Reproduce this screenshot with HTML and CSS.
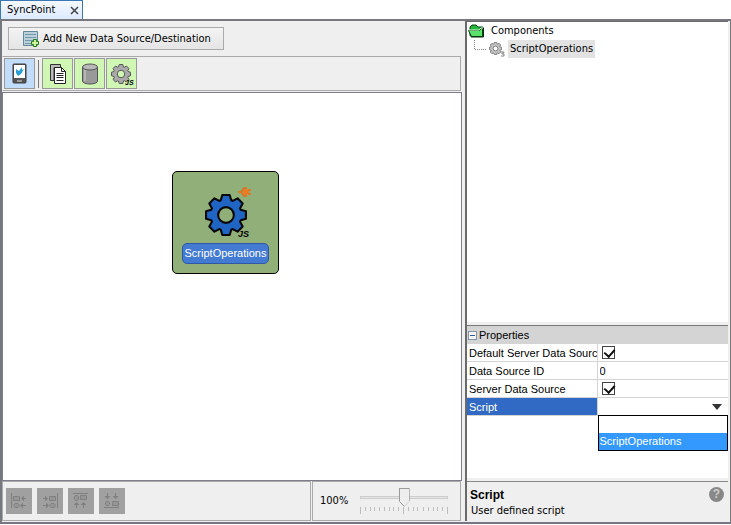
FILE: index.html
```html
<!DOCTYPE html>
<html lang="en">
<head>
<meta charset="utf-8">
<title>SyncPoint</title>
<link rel="stylesheet" href="styles.css">
</head>
<body>
<svg class="defs" aria-hidden="true">
  <symbol id="gear" viewBox="0 0 40 40">
    <path fill-rule="evenodd" d="M16.500 1H23.500L25 6L26.400 6.600L31 4.100L35.900 9L33.400 13.600L34 15L39 16.500V23.500L34 25L33.400 26.400L35.900 31L31 35.900L26.400 33.400L25 34L23.500 39H16.500L15 34L13.600 33.400L9 35.900L4.100 31L6.600 26.400L6 25L1 23.500V16.500L6 15L6.600 13.600L4.100 9L9 4.100L13.600 6.600L15 6ZM20 12.500a7.500 7.500 0 1 0 0 15a7.500 7.500 0 1 0 0-15z" stroke-linejoin="round"/>
  </symbol>
</svg>
<header class="tabs">
  <div class="tab">
    <span>SyncPoint</span>
    <button class="tab-close" type="button" aria-label="Close tab"><svg width="9" height="9" viewBox="0 0 9 9"><path d="M1 1l7 7M8 1L1 8" stroke="#444" stroke-width="1.500"/></svg></button>
  </div>
</header>
<main class="workspace">
  <section class="editor">
    <div class="actions">
      <button class="add-source" type="button">
        <svg width="16" height="16" viewBox="0 0 16 16"><path d="M.5.500h14v14H.5z" fill="#b9d1dc" stroke="#668795"/><path d="M2 3.500h11M2 6.500h11M2 9.500h8M2 12.500h7" stroke="#7798a8"/><path d="M10.500 8.500h3v2h2v3h-2v2h-3v-2h-2v-3h2z" fill="#c8f59c" stroke="#267b16"/></svg>
        Add New Data Source/Destination
      </button>
    </div>
    <div class="toolbar">
      <button class="tool tool-active" type="button" aria-label="Device">
        <svg width="15" height="21" viewBox="0 0 15 21"><rect x="1" y="1" width="13" height="19" rx="1" fill="#555" stroke="#3c3c3c"/><path d="M2 2h11v13H2z" fill="#fff"/><path d="M4 6l3 2 3-4v3l2-1-3 5-3 2-2-3z" fill="#2a9ed8"/><path d="M5 17h5v2H5z" fill="#999"/></svg>
      </button>
      <span class="tool-separator"></span>
      <button class="tool" type="button" aria-label="Document">
        <svg width="16" height="20" viewBox="0 0 16 20"><path d="M.5.500h10v3H4v13H.5z" fill="#bbb" stroke="#333"/><path d="M4.500 3.500h7l4 4v12h-11z" fill="#fff" stroke="#222"/><path d="M11.500 3.500v4h4M6.500 9.500h7M6.500 11.500h7M6.500 13.500h7M6.500 16.500h7" fill="none" stroke="#222"/></svg>
      </button>
      <button class="tool" type="button" aria-label="Database">
        <svg width="16" height="22" viewBox="0 0 16 22"><path d="M.5 4v14c0 4 15 4 15 0V4" fill="#999" stroke="#555"/><path d="M3 6v12" stroke="#b5b5b5" stroke-width="2"/><ellipse cx="8" cy="4" rx="7.500" ry="3" fill="#b8b8b8" stroke="#555"/></svg>
      </button>
      <button class="tool" type="button" aria-label="Script">
        <svg width="24" height="24" viewBox="0 0 24 24"><use href="#gear" x="1" y="2" width="20" height="20" fill="#aaa" stroke="#555" stroke-width="2"/><text class="js-small" x="15" y="23">JS</text></svg>
      </button>
    </div>
    <div class="canvas">
      <article class="node">
        <svg width="53" height="54" viewBox="0 0 53 54"><use href="#gear" x="6" y="10" width="42" height="42" fill="#2065c4" stroke="#080808" stroke-width="2"/><path d="M39 8h3l3-4h3M42 8l3 4h3M49 6h3M49 10h3" fill="none" stroke="#e36d16" stroke-width="1.500"/><circle cx="47" cy="8" r="3" fill="#ef7b21"/><text class="js" x="39" y="53">JS</text></svg>
        <span class="node-label">ScriptOperations</span>
      </article>
    </div>
    <footer class="editor-footer">
      <div class="alignment">
        <button class="align" type="button" disabled aria-label="Align left"><svg width="18" height="18" viewBox="0 0 18 18"><path class="edge" d="M1.500 1v15"/><path class="shape" d="M3.500 4.500h6v4h-6zM5 11.500h3l1 1v2l-1 1H5l-1-1v-2z"/><path class="stem" d="M12 6.500h4M11 13.500h5"/><path class="head" d="M14 3.500v6l-3-3zM13 10.500v6l-3-3z"/></svg></button>
        <button class="align" type="button" disabled aria-label="Align right"><svg width="18" height="18" viewBox="0 0 18 18"><path class="edge" d="M16.500 1v15"/><path class="shape" d="M8.500 4.500h6v4h-6zM10 11.500h3l1 1v2l-1 1h-3l-1-1v-2z"/><path class="stem" d="M2 6.500h4M2 13.500h5"/><path class="head" d="M4 3.500v6l3-3zM5 10.500v6l3-3z"/></svg></button>
        <button class="align" type="button" disabled aria-label="Align top"><svg width="18" height="18" viewBox="0 0 18 18"><path class="edge" d="M1 1.500h15"/><path class="shape" d="M3.500 3.500h2l1 1v3l-1 1h-2l-1-1v-3zM8.500 3.500h6v4h-6z"/><path class="stem" d="M4.500 12v4M11.500 12v4"/><path class="head" d="M1.500 13h6l-3-3zM8.500 13h6l-3-3z"/></svg></button>
        <button class="align" type="button" disabled aria-label="Align bottom"><svg width="18" height="18" viewBox="0 0 18 18"><path class="edge" d="M1 15.500h15"/><path class="shape" d="M3.500 9.500h2l1 1v2l-1 1h-2l-1-1v-2zM9.500 9.500h6v4h-6z"/><path class="stem" d="M4.500 1v4M12.500 1v4"/><path class="head" d="M1.500 4h6l-3 3zM9.500 4h6l-3 3z"/></svg></button>
      </div>
      <div class="zoom">
        <label for="zoom">100%</label>
        <div class="slider">
          <input id="zoom" type="range" min="0" max="200" value="100">
          <svg class="ticks" height="8" viewBox="0 0 87 8" preserveAspectRatio="none" shape-rendering="crispEdges"><path d="M.5 0v7M5.500 0v4M10.500 0v4M14.500 0v4M19.500 0v4M24.500 0v4M29.500 0v4M33.500 0v4M38.500 0v4M43.500 0v7M48.500 0v4M53.500 0v4M57.500 0v4M62.500 0v4M67.500 0v4M72.500 0v4M76.500 0v4M81.500 0v4M86.500 0v7" stroke="#bdbdbd"/></svg>
        </div>
      </div>
    </footer>
  </section>
  <aside class="sidebar">
    <section class="components">
      <div class="tree-root">
        <svg width="17" height="14" viewBox="0 0 17 14"><path d="M2 3l2-2h4l2 2h5v9H2z" fill="#24b33b" stroke="#064915"/><path d="M.5 6.500h11l2-2h1v8h-11z" fill="#5be26b" stroke="#064915"/><path d="M1 6h10l2-2h2" fill="none" stroke="#dfffdf"/><path d="M15.500 4v9H3" fill="none" stroke="#062b0b"/></svg>
        <span>Components</span>
      </div>
      <div class="tree-child">
        <svg class="branch" width="12" height="10" viewBox="0 0 12 10"><path d="M.5 0v9.500H12" fill="none" stroke="#888" stroke-dasharray="1 1"/></svg>
        <svg width="16" height="16" viewBox="0 0 16 16"><use href="#gear" x="0" y="1" width="13" height="13" fill="#c5c5c5" stroke="#777" stroke-width="3"/><path d="M12 11h3v1h-2v1h2v2h-3" fill="none" stroke="#888"/></svg>
        <span class="tree-selected">ScriptOperations</span>
      </div>
    </section>
    <section class="properties">
      <table>
        <thead><tr><th colspan="2"><button class="collapse" type="button" aria-label="Collapse properties"></button>Properties</th></tr></thead>
        <tbody>
          <tr><td><label for="default-source">Default Server Data Source</label></td><td><input id="default-source" type="checkbox" checked></td></tr>
          <tr><td><label for="source-id">Data Source ID</label></td><td><input id="source-id" class="value" type="text" value="0"></td></tr>
          <tr><td><label for="server-source">Server Data Source</label></td><td><input id="server-source" type="checkbox" checked></td></tr>
          <tr class="selected"><td><label for="script">Script</label></td><td class="script-cell">
            <select id="script"><option></option><option>ScriptOperations</option></select>
            <ul class="menu" role="listbox" aria-label="Script"><li role="option" aria-selected="false"></li><li class="menu-active" role="option" aria-selected="true">ScriptOperations</li></ul>
          </td></tr>
        </tbody>
      </table>
    </section>
    <section class="description">
      <div><h2>Script</h2><p>User defined script</p></div>
      <button class="help" type="button" aria-label="Help">?</button>
    </section>
  </aside>
</main>
</body>
</html>
```
FILE: styles.css
```css
* { box-sizing: border-box; }
body {
  display: flex; flex-direction: column; height: 100vh; margin: 0; padding-bottom: 1px;
  font: 11px/16px "DejaVu Sans Condensed", "Liberation Sans", sans-serif;
  color: #000; background: #fff;
}
button, input, select { font: inherit; color: inherit; margin: 0; }
button { padding: 0; }
svg { display: block; flex: none; }
.defs { position: absolute; width: 0; height: 0; }
.tabs { display: flex; flex: none; height: 19px; }
.tab {
  display: flex; align-items: center; gap: 15px; padding: 0 3px 0 6px;
  background: linear-gradient(#f5f9ff, #dceaff);
  border: 1px solid #3977b5; border-bottom: 0;
}
.tab-close { border: 0; background: none; }
.workspace {
  flex: 1; min-height: 0; display: grid;
  grid-template-columns: minmax(0, 460fr) minmax(0, 265fr); column-gap: 3px;
  padding-bottom: 1px;
  border: solid #77777f; border-width: 2px 1px 2px 2px; background: #efefef;
}
.editor { display: flex; flex-direction: column; min-width: 0; }
.actions { padding: 6px; height: 35px; flex: none; }
.add-source {
  display: flex; align-items: center; gap: 4px; height: 23px; padding: 0 12px 0 14px;
  border: 1px solid #aaa; background: linear-gradient(#f3f3f3, #e5e5e5); white-space: nowrap;
}
.toolbar {
  display: flex; flex: none; align-items: center; gap: 1px; height: 35px; padding: 0 1px; margin-right: 1px;
  border: 1px solid #aaa; border-left-color: #efefef;
}
.tool {
  display: grid; place-items: center; width: 31px; height: 31px;
  border: 1px solid #999; background: #d1f7b4;
}
.tool-active { background: #c2dcfb; }
.tool-separator { width: 1px; height: 28px; margin: 0 2px; background: #777; }
.js-small { font: italic bold 7px "Liberation Sans", sans-serif; }
.js { font: italic bold 9px "Liberation Sans", sans-serif; }
.canvas {
  flex: 1; min-height: 0; position: relative; margin-top: 1px;
  background: #fff; border: 1px solid #7d7d89;
}
.node {
  position: absolute; left: 169px; top: 78px; width: 107px; height: 103px;
  display: flex; flex-direction: column; align-items: center; justify-content: flex-end; gap: 5px;
  padding-bottom: 9px; background: #91af79; border: 1px solid #000; border-radius: 5px;
}
.node-label {
  font: 11px/19px "Liberation Sans", sans-serif; color: #fff; background: #447bd2;
  border: 1px solid #3158a5; border-radius: 5px; padding: 0 2px;
}
.editor-footer { display: flex; flex: none; gap: 1px; height: 40px; padding-right: 1px; }
.alignment { flex: 1; display: flex; align-items: center; gap: 5px; padding: 0 3px; border: 1px solid #aaa; }
.align { display: grid; place-items: center; width: 26px; height: 26px; background: #a0a0a0; border: 0; }
.edge, .stem { fill: none; stroke: #808080; }
.shape { fill: #959595; stroke: #808080; }
.head { fill: #808080; }
.zoom { display: flex; align-items: center; width: 149px; padding: 0 12px 0 7px; gap: 12px; border: 1px solid #aaa; }
.slider { flex: 1; min-width: 0; }
.slider input { display: block; width: 100%; height: 19px; appearance: none; background: none; }
.slider input::-webkit-slider-runnable-track { height: 3px; border: 1px solid #ccc; background: #e6e6e6; }
.slider input::-webkit-slider-thumb {
  appearance: none; width: 11px; height: 19px; margin-top: -9px;
  background: conic-gradient(from -45deg at 50% 92%, #ededed 90deg, #999 0) 1px 1px / 9px 18px no-repeat #999;
  clip-path: polygon(0 0, 100% 0, 100% 70%, 50% 100%, 0 70%);
}
.ticks { width: 100%; }
.sidebar { display: flex; flex-direction: column; min-width: 0; border-left: 2px solid #6a6a6a; padding-right: 2px; }
.components { flex: 1; min-height: 0; padding: 0 1px; background: #fff; border-top: 1px solid #6a6a6a; }
.tree-root, .tree-child { display: flex; align-items: center; height: 18px; gap: 6px; }
.tree-child { padding-left: 6px; gap: 3px; }
.branch { align-self: flex-start; }
.tree-selected { background: #e2e2e2; line-height: 18px; padding: 0 2px; }
.properties {
  flex: none; height: 153px; margin-top: 3px; background: #fff;
  border-top: 1px solid #777; font: 11px/16px "Liberation Sans", sans-serif;
}
table { width: 100%; table-layout: fixed; border-collapse: separate; border-spacing: 0; }
th { height: 18px; padding: 0 1px; background: #d4d4d4; text-align: left; font-weight: normal; }
.collapse {
  width: 9px; height: 9px; margin-right: 2px; border: 1px solid #8294aa; vertical-align: 0;
  background: linear-gradient(#3158a0, #3158a0) center / 5px 1px no-repeat #f5f5f5;
}
td { height: 18px; padding: 0 2px; border: solid #d4d4d4; border-width: 0 1px 1px 0; white-space: nowrap; overflow: hidden; }
td:last-child { border-right: 0; }
td label { display: block; }
.selected td:first-child { color: #fff; background: #316ac5; }
input[type="checkbox"] {
  display: block; appearance: none; width: 13px; height: 13px; margin-left: 2px; border: 1px solid #444; background: #fff;
}
input[type="checkbox"]:checked::after {
  content: ""; display: block; width: 5px; height: 8px; margin-left: 3px;
  border: solid #111; border-width: 0 2px 2px 0; transform: rotate(42deg);
}
.value { display: block; width: 100%; height: 16px; border: 0; padding: 0; background: none; }
td.script-cell { position: relative; overflow: visible; }
select { display: block; width: 100%; height: 16px; border: 0; appearance: none; background: none; }
.script-cell::after {
  content: ""; position: absolute; right: 6px; top: 6px; pointer-events: none;
  border: solid transparent; border-width: 6px 5px 0; border-top-color: #333;
}
.menu {
  position: absolute; left: 0; right: 0; top: 17px; z-index: 1; margin: 0; padding: 0;
  list-style: none; background: #fff; border: 1px solid #000;
}
.menu li { height: 17px; padding: 0 1px; line-height: 17px; }
.menu .menu-active { color: #fff; background: #3399ff; }
.description {
  flex: none; display: flex; justify-content: space-between; align-items: flex-start; height: 40px; margin-top: 3px;
  padding: 5px 4px 0 3px; border-top: 1px solid #888;
}
h2 { margin: 0; font: bold 12px/16px "Liberation Sans", sans-serif; }
p { margin: 0; padding-left: 1px; }
.help {
  width: 15px; height: 15px; border: 0; border-radius: 50%; color: #ccc; background: #888;
  font: bold 12px/15px "Liberation Sans", sans-serif;
}
```
